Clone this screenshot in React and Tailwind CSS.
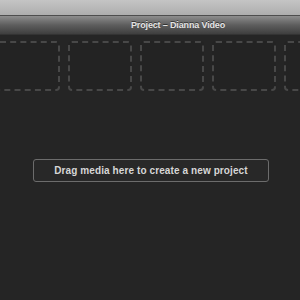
import React from 'react';

const tiles = [0, 1, 2, 3, 4];

const App = () => {
    return (
        <div className="w-[300px] h-[300px] overflow-hidden bg-[#252525] flex flex-col" style={{ fontFamily: '"Liberation Sans", Arial, sans-serif' }}>
            {/* Toolbar strip */}
            <div className="h-[15px] bg-gradient-to-b from-[#c4c4c4] to-[#aeaeae] border-b border-[#4e4e4e] box-content" />

            {/* Title bar */}
            <div className="h-[18px] bg-gradient-to-b from-[#8e8e8e] via-[#5e5e5e] to-[#3e3e3e] flex items-center pl-[131px] pt-[2px]">
                <span className="text-[9px] font-bold text-[#e4e4e4] whitespace-nowrap tracking-[-0.15px] [text-shadow:0_-1px_0_rgba(0,0,0,0.5)]">
                    Project – Dianna Video
                </span>
            </div>
            <div className="h-px bg-[#333]" />

            {/* Clip tiles */}
            <div className="flex gap-2 -ml-1 mt-[6px]">
                {tiles.map((t) => (
                    <div
                        key={t}
                        className="shrink-0 w-16 h-[50px] rounded-[4px] border-2 border-dashed border-[#484848] bg-[#232323]"
                    />
                ))}
            </div>

            {/* Drop target */}
            <div className="flex justify-center mt-[68px] pl-[2px]">
                <div className="w-[236px] h-[23px] rounded-[3px] border border-[#6c6c6c] bg-[#282828] flex items-center justify-center">
                    <span className="text-[10px] font-bold text-[#d6d6d6] whitespace-nowrap tracking-[0.1px]">
                        Drag media here to create a new project
                    </span>
                </div>
            </div>
        </div>
    );
};

export default App;
